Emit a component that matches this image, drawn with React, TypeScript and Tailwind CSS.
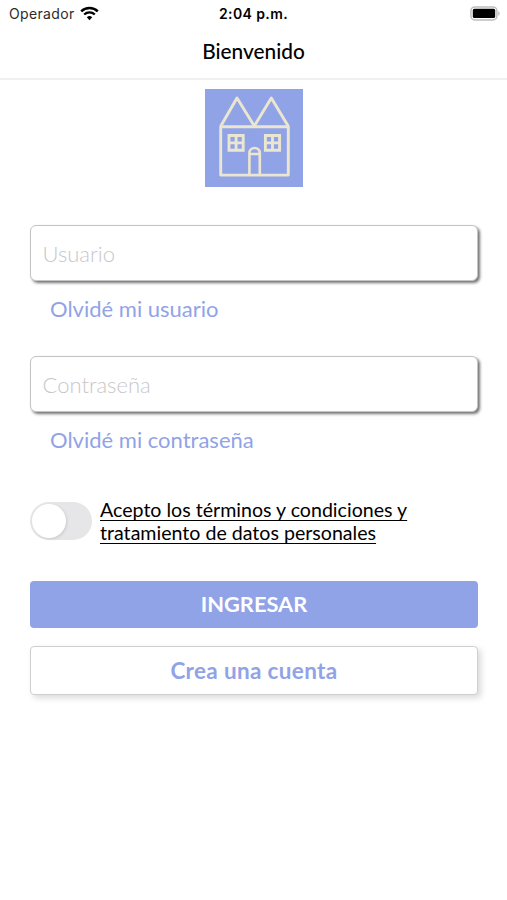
import { useState } from "react";

const WifiIcon = () => (
  <svg width="19" height="15" viewBox="0 0 19 15" fill="none" stroke="#000">
    <path d="M1.2 5.3a12 12 0 0 1 16.6 0" strokeWidth="2.5" />
    <path d="M4.2 8.5a7.7 7.7 0 0 1 10.6 0" strokeWidth="2.3" />
    <path d="M9.5 14.2l-2.7-2.9a3.9 3.9 0 0 1 5.4 0z" fill="#000" stroke="none" />
  </svg>
);

const BatteryIcon = () => (
  <svg width="31" height="15" viewBox="0 0 31 15">
    <rect x="0.9" y="0.9" width="26" height="13" rx="4" fill="#fff" stroke="#bdbdbd" strokeWidth="1.5" />
    <rect x="2.8" y="2.8" width="22.4" height="9.2" rx="1.6" fill="#000" />
    <path d="M28.4 5.2c1.6.6 1.6 4 0 4.6z" fill="#b0b0b0" />
  </svg>
);

const HouseLogo = () => (
  <svg width="98" height="98" viewBox="0 0 98 98" fill="none" stroke="#ebe6d0" strokeWidth="2.9">
    <rect width="98" height="98" fill="#91a3e7" stroke="none" />
    <path d="M15.7 37.7h67.6v48.4H15.7z" strokeLinejoin="round" />
    <path d="M15.7 37.2L32 9l17.3 28L66.3 9l17 28.2" strokeLinejoin="round" />
    <path d="M24 46.5h14.2v14.8H24zM31.1 46.5v14.8M24 53.9h14.2" />
    <path d="M60.4 46.5h14.2v14.8H60.4zM67.5 46.5v14.8M60.4 53.9h14.2" />
    <path d="M44.4 86V64.2a5.2 5.2 0 0 1 10.4 0V86M44.4 65h10.4" strokeWidth="2.6" />
  </svg>
);

interface FieldProps {
  placeholder: string;
  type: string;
  link: string;
}

const Field = ({ placeholder, type, link }: FieldProps) => (
  <div className="flex h-[131px] flex-col items-start">
    <input
      type={type}
      placeholder={placeholder}
      className="h-[56px] w-full rounded-md border border-[#c4c4c4] bg-white pl-[11.5px] pr-3 text-[22px] font-light outline-none placeholder:text-[#c7c7c9] shadow-[2px_2px_3px_rgba(0,0,0,0.55)]"
    />
    <a href="#" className="ml-5 mt-[14px] text-[22px] leading-[28px] text-[#91a3e7]">
      {link}
    </a>
  </div>
);

const App = () => {
  const [accepted, setAccepted] = useState(false);

  return (
    <div className="flex h-[900px] w-[507px] flex-col overflow-hidden bg-white font-['Lato',sans-serif] text-black">
      <div className="grid h-[26px] grid-cols-3 items-center pl-[9px] pr-[6px] font-['Inter',sans-serif] text-[14px]">
        <div className="flex items-center gap-[5px] text-[#2b2b2b]">
          <span className="tracking-[0.35px]">Operador</span>
          <WifiIcon />
        </div>
        <span className="-ml-[3px] text-center font-semibold tracking-[0.4px]">2:04 p.m.</span>
        <div className="flex justify-end">
          <BatteryIcon />
        </div>
      </div>

      <header className="flex h-[54px] items-center justify-center border-b-2 border-[#f0f0f0] pb-[2px]">
        <h1 className="text-[20.8px] font-medium">Bienvenido</h1>
      </header>

      <main className="flex flex-col pl-[30px] pr-[29px] pt-[9px]">
        <div className="mb-[38px] flex justify-center pr-px">
          <HouseLogo />
        </div>

        <Field placeholder="Usuario" type="text" link="Olvidé mi usuario" />
        <Field placeholder="Contraseña" type="password" link="Olvidé mi contraseña" />

        <div className="mt-[10px] flex h-[48px] items-center gap-2">
          <button
            role="switch"
            aria-checked={accepted}
            onClick={() => setAccepted(!accepted)}
            className="flex h-[38px] w-[62px] items-center rounded-full bg-[#e6e6e8] px-[2px]"
          >
            <span className="size-[34px] rounded-full bg-white shadow-[1px_1px_3px_rgba(0,0,0,0.12)]" />
          </button>
          <p className="w-[330px] text-[19.6px] leading-[23px] underline decoration-1 underline-offset-[3px]">
            Acepto los términos y condiciones y tratamiento de datos personales
          </p>
        </div>

        <button className="mt-[36px] h-[47px] rounded bg-[#91a3e7] text-[21.8px] font-bold text-white">
          INGRESAR
        </button>
        <button className="mt-[18px] h-[49px] rounded border border-[#cfcfcf] bg-white text-[22.5px] font-bold tracking-[0.35px] text-[#91a3e7] shadow-[3px_3px_6px_rgba(0,0,0,0.15)]">
          Crea una cuenta
        </button>
      </main>
    </div>
  );
};

export default App;
